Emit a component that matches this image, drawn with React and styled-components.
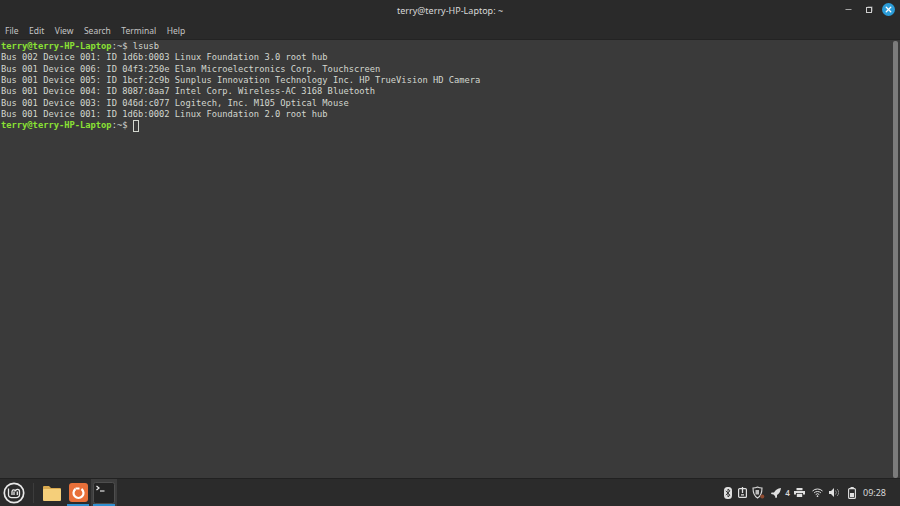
import React from 'react'
import styled, { createGlobalStyle } from 'styled-components'
import { Minus, X } from 'lucide-react'

const GlobalStyle = createGlobalStyle`
  html, body {
    margin: 0;
    padding: 0;
    background: #3a3a3a;
  }
`

const Screen = styled.div`
  width: 900px;
  height: 506px;
  display: flex;
  flex-direction: column;
  overflow: hidden;
  background: #3a3a3a;
  font-family: 'Noto Sans', 'Liberation Sans', sans-serif;
`

const Window = styled.div`
  flex: 1;
  min-height: 0;
  display: flex;
  flex-direction: column;
`

const Header = styled.div`
  background: #2a2a2a;
  flex: none;
`

const TitleBar = styled.div`
  height: 21px;
  display: flex;
  align-items: center;
  justify-content: center;
  position: relative;
  color: #d8d8d8;
  font-size: 9px;
`

const WindowButtons = styled.div`
  position: absolute;
  right: 5px;
  top: 3px;
  display: flex;
  align-items: center;
  gap: 7px;
`

const PlainButton = styled.div`
  width: 13px;
  height: 13px;
  display: flex;
  align-items: center;
  justify-content: center;
  color: #cfcfcf;
`

const RestoreIcon = styled.div`
  width: 4px;
  height: 4px;
  border: 1.5px solid #cfcfcf;
  box-shadow: 1px -1px 0 -0.5px #8a8a8a;
`

const CloseButton = styled.div`
  width: 13px;
  height: 13px;
  border-radius: 50%;
  background: #2b9cd8;
  color: #fff;
  display: flex;
  align-items: center;
  justify-content: center;
`

const MenuBar = styled.div`
  height: 17px;
  padding: 1px 0 0 5px;
  display: flex;
  align-items: center;
  gap: 10.5px;
  color: #c4c4c4;
  font-size: 8.5px;
  border-bottom: 1px solid #232323;
`

const Body = styled.div`
  flex: 1;
  min-height: 0;
  display: flex;
`

const Terminal = styled.pre`
  flex: 1;
  margin: 0;
  padding: 1px 0 0 1px;
  font-family: 'DejaVu Sans Mono', 'Liberation Mono', monospace;
  font-size: 8.75px;
  line-height: 11.33px;
  color: #d3d7cf;
`

const Prompt = styled.span`
  color: #8ae234;
  font-weight: bold;
`

const Cursor = styled.span`
  display: inline-block;
  box-sizing: border-box;
  width: 6.5px;
  height: 12px;
  border: 1px solid #d3d7cf;
  vertical-align: top;
`

const ScrollTrack = styled.div`
  width: 9px;
  flex: none;
  padding-top: 1px;
`

const ScrollThumb = styled.div`
  width: 5px;
  height: 437px;
  margin: 0 auto;
  border-radius: 2px;
  background: #7b7b7b;
`

const Panel = styled.div`
  flex: none;
  height: 27px;
  background: #2b2b2b;
  border-top: 1px solid #212121;
  display: flex;
  align-items: center;
  color: #d8d8d8;
`

const MintButton = styled.div`
  width: 28px;
  margin-right: 5px;
  display: flex;
  justify-content: center;
`

const Divider = styled.div`
  width: 1px;
  height: 20px;
  background: #3c3c3c;
  margin-right: 5px;
`

const Launcher = styled.div`
  width: 26px;
  height: 27px;
  display: flex;
  align-items: center;
  justify-content: center;
  position: relative;
  background: ${p => (p.$active ? '#3d3d3d' : 'transparent')};
  &::after {
    content: '';
    display: ${p => (p.$running ? 'block' : 'none')};
    position: absolute;
    left: 2px;
    right: 2px;
    bottom: 0;
    height: 2px;
    background: #2f8fd0;
  }
`

const Tray = styled.div`
  margin-left: auto;
  display: flex;
  align-items: center;
  padding-right: 14px;
`

const TraySlot = styled.div`
  width: ${p => p.$width}px;
  display: flex;
  justify-content: center;
  align-items: center;
`

const TrayCount = styled.span`
  font-size: 8px;
  font-weight: 600;
`

const Clock = styled.span`
  font-size: 9px;
  margin-left: 1px;
`

const lines = [
  'Bus 002 Device 001: ID 1d6b:0003 Linux Foundation 3.0 root hub',
  'Bus 001 Device 006: ID 04f3:250e Elan Microelectronics Corp. Touchscreen',
  'Bus 001 Device 005: ID 1bcf:2c9b Sunplus Innovation Technology Inc. HP TrueVision HD Camera',
  'Bus 001 Device 004: ID 8087:0aa7 Intel Corp. Wireless-AC 3168 Bluetooth',
  'Bus 001 Device 003: ID 046d:c077 Logitech, Inc. M105 Optical Mouse',
  'Bus 001 Device 001: ID 1d6b:0002 Linux Foundation 2.0 root hub'
]

const menus = ['File', 'Edit', 'View', 'Search', 'Terminal', 'Help']

const MintLogo = () => (
  <svg width="22" height="22" viewBox="0 0 22 22" fill="none" stroke="#e8e8e8">
    <circle cx="11" cy="11" r="9.7" strokeWidth="1.7" />
    <path d="M5.5 6.5v6.2a3 3 0 0 0 3 3h5a3 3 0 0 0 3-3V9.5a2 2 0 0 0-4-.3 1.800 1.800 0 0 0-3.500.3V13M11 9.500V13M14.300 9.500V13" strokeWidth="1.300" />
  </svg>
)

const Folder = () => (
  <svg width="20" height="18" viewBox="0 0 20 18">
    <path d="M1 3a1 1 0 0 1 1-1h5l2 2h9a1 1 0 0 1 1 1v1H1z" fill="#d9a94f" />
    <rect x="1" y="5" width="18" height="12" rx="1" fill="#f5cf7a" />
  </svg>
)

const Backup = () => (
  <svg width="19" height="19" viewBox="0 0 19 19" fill="none">
    <rect width="19" height="19" rx="3" fill="#e8703a" />
    <path d="M6.5 6a5 5 0 1 0 6 0" stroke="#fff" strokeWidth="2.2" />
    <path d="M6.5 5.500h4" stroke="#fff" strokeWidth="2" />
  </svg>
)

const TerminalIcon = () => (
  <svg width="22" height="22" viewBox="0 0 22 22" fill="none">
    <rect x="0.5" y="0.5" width="21" height="21" rx="2" fill="#242424" stroke="#4e4e4e" />
    <path d="M3.5 4l2.500 2-2.500 2" stroke="#f0f0f0" strokeWidth="1.2" />
    <path d="M7 9h4.500" stroke="#e0e0e0" strokeWidth="1.2" />
  </svg>
)

const Bluetooth = () => (
  <svg width="8" height="12" viewBox="0 0 8 12">
    <rect width="8" height="12" rx="3.5" fill="#e0e0e0" />
    <path d="M1.800 3.800l4.200 4.400-2 1.800V2l2 1.800-4.200 4.400" fill="none" stroke="#2b2b2b" strokeWidth="0.9" />
  </svg>
)

const Clipboard = () => (
  <svg width="9" height="11" viewBox="0 0 9 11" fill="none">
    <rect x="0.6" y="1.6" width="7.8" height="8.8" rx="1" stroke="#e0e0e0" strokeWidth="1.2" />
    <path d="M4.500 0v6M3 7.800h3" stroke="#e0e0e0" strokeWidth="1.3" />
  </svg>
)

const Shield = () => (
  <svg width="13" height="13" viewBox="0 0 13 13" fill="none">
    <path d="M5.500 1C4 1.800 2.500 2 1 2c0 4.500 1 8 4.500 10C9 10 10 6.500 10 2 8.500 2 7 1.800 5.500 1z" stroke="#dcdcdc" strokeWidth="1.1" />
    <path d="M3.500 4h3.500v4.500H3.500z" fill="#bdbdbd" />
    <circle cx="10.3" cy="10.5" r="2" fill="#8f4a30" />
  </svg>
)

const Notify = () => (
  <svg width="10" height="10" viewBox="0 0 10 10">
    <path d="M10 0C6.500 0.500 4.500 2 3 4.500H0.500L0 6l2.500 0.500L4 8l0.500 2L6 9.500V7C8.500 5.500 9.500 3.500 10 0z" fill="#e0e0e0" />
  </svg>
)

const Printer = () => (
  <svg width="11" height="9" viewBox="0 0 11 9">
    <path d="M2.500 0h6v2.300h-6zM0 3h11v3.500H9V5H2v1.500H0zM2.800 5.800h5.400V9H2.800z" fill="#e0e0e0" />
  </svg>
)

const Wifi = () => (
  <svg width="11" height="9" viewBox="0 0 11 9" fill="none" stroke="#e0e0e0" strokeWidth="1">
    <path d="M0.500 3a7.200 7.200 0 0 1 10 0M2.100 4.900a4.800 4.800 0 0 1 6.800 0M3.700 6.600a2.500 2.500 0 0 1 3.600 0" />
    <circle cx="5.5" cy="8.2" r="0.5" fill="#e0e0e0" />
  </svg>
)

const Volume = () => (
  <svg width="10" height="9" viewBox="0 0 10 9" fill="none">
    <path d="M0 3h2l3-3v9L2 6H0z" fill="#e0e0e0" />
    <path d="M6.500 2.500a3 3 0 0 1 0 4M8.200 1a5.300 5.300 0 0 1 0 7" stroke="#8a8a8a" />
  </svg>
)

const Battery = () => (
  <svg width="8" height="12" viewBox="0 0 8 12" fill="none">
    <path d="M2.500 0.500h3V2" stroke="#e0e0e0" />
    <rect x="0.6" y="1.6" width="6.8" height="9.8" rx="1" stroke="#e0e0e0" strokeWidth="1.1" />
    <rect x="2" y="6" width="4" height="4" fill="#e0e0e0" />
  </svg>
)

export default function App() {
  return (
    <>
      <GlobalStyle />
      <Screen>
        <Window>
          <Header>
            <TitleBar>
              terry@terry-HP-Laptop: ~
              <WindowButtons>
                <PlainButton>
                  <Minus size={9} strokeWidth={2} />
                </PlainButton>
                <PlainButton>
                  <RestoreIcon />
                </PlainButton>
                <CloseButton>
                  <X size={9} strokeWidth={3.5} />
                </CloseButton>
              </WindowButtons>
            </TitleBar>
            <MenuBar>
              {menus.map(menu => (
                <span key={menu}>{menu}</span>
              ))}
            </MenuBar>
          </Header>
          <Body>
            <Terminal>
              <Prompt>terry@terry-HP-Laptop</Prompt>:~$ lsusb
              {'\n'}
              {lines.join('\n')}
              {'\n'}
              <Prompt>terry@terry-HP-Laptop</Prompt>:~$ <Cursor />
            </Terminal>
            <ScrollTrack>
              <ScrollThumb />
            </ScrollTrack>
          </Body>
        </Window>
        <Panel>
          <MintButton>
            <MintLogo />
          </MintButton>
          <Divider />
          <Launcher>
            <Folder />
          </Launcher>
          <Launcher $running>
            <Backup />
          </Launcher>
          <Launcher $active $running>
            <TerminalIcon />
          </Launcher>
          <Tray>
            <TraySlot $width={14}>
              <Bluetooth />
            </TraySlot>
            <TraySlot $width={15}>
              <Clipboard />
            </TraySlot>
            <TraySlot $width={18}>
              <Shield />
            </TraySlot>
            <TraySlot $width={17}>
              <Notify />
            </TraySlot>
            <TraySlot $width={5}>
              <TrayCount>4</TrayCount>
            </TraySlot>
            <TraySlot $width={20}>
              <Printer />
            </TraySlot>
            <TraySlot $width={16}>
              <Wifi />
            </TraySlot>
            <TraySlot $width={16}>
              <Volume />
            </TraySlot>
            <TraySlot $width={20}>
              <Battery />
            </TraySlot>
            <Clock>09:28</Clock>
          </Tray>
        </Panel>
      </Screen>
    </>
  )
}
